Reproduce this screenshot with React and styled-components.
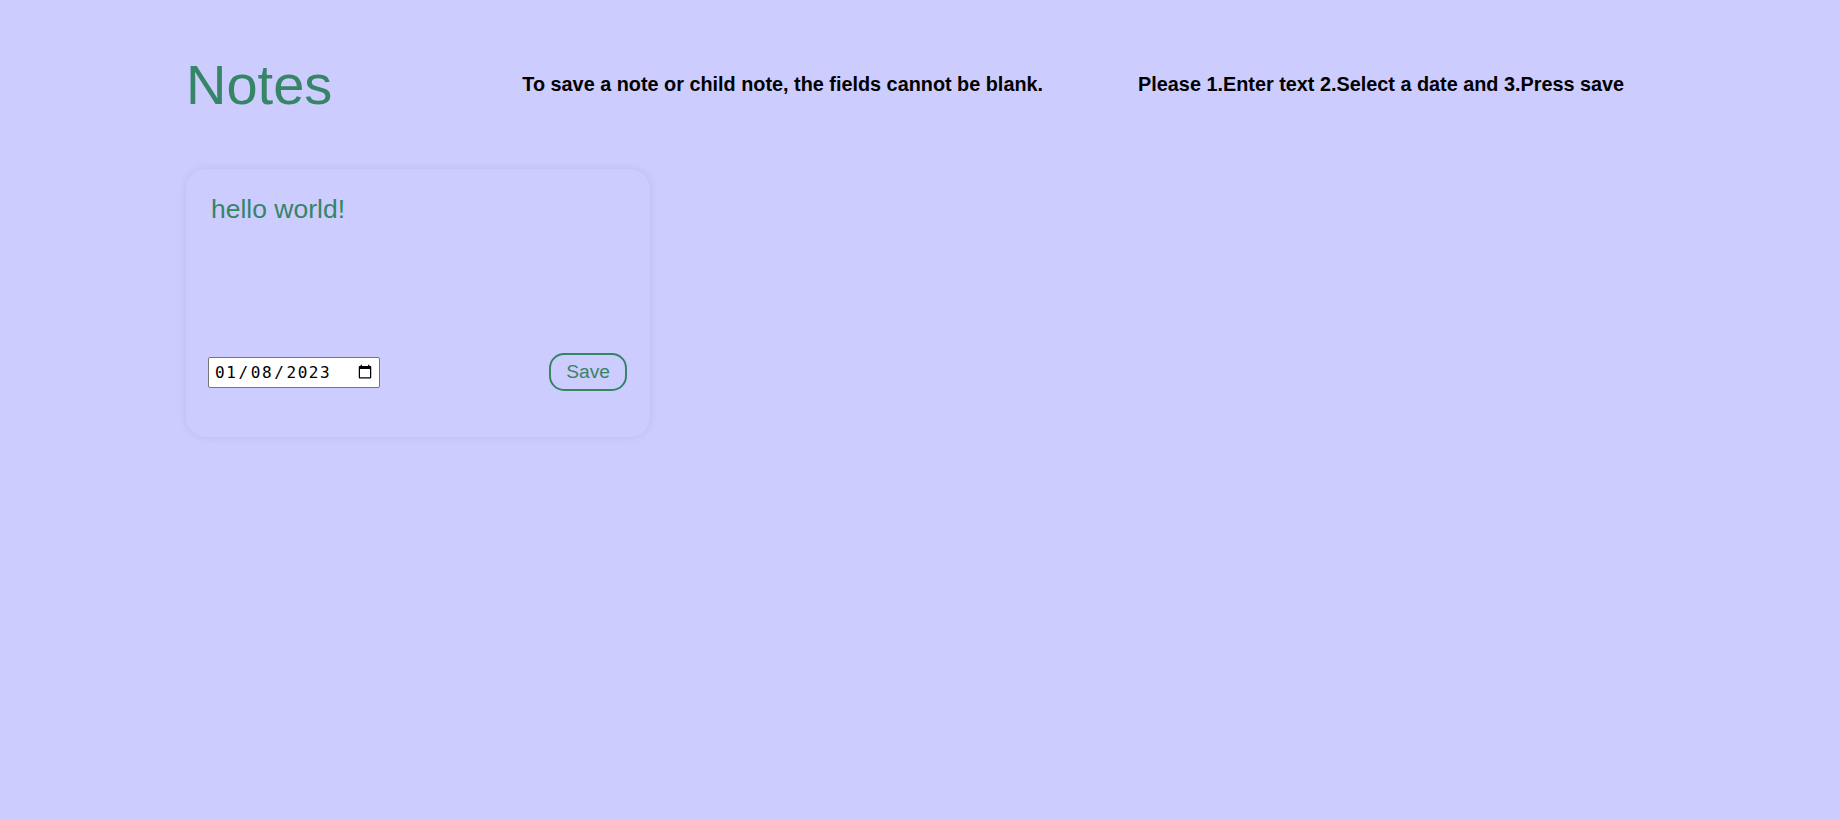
import styled, { createGlobalStyle } from "styled-components";

const GlobalStyle = createGlobalStyle`
	html, body {
		margin: 0;
		padding: 0;
		background-color: #ccccff;
		font-family: "Liberation Sans", Arial, sans-serif;
	}
`;

const Page = styled.div`
	min-height: 820px;
	padding: 52px 186px 0 186px;
	box-sizing: border-box;
`;

const Header = styled.header`
	display: flex;
	align-items: center;
`;

const Title = styled.h1`
	margin: 0;
	font-size: 56px;
	font-weight: 400;
	color: #368566;
`;

const Hint = styled.h3`
	margin: 0 0 0 ${(p) => p.$gap}px;
	font-size: 19.83px;
	font-weight: 700;
	color: #000;
`;

const Notes = styled.div`
	display: flex;
	flex-wrap: wrap;
	gap: 20px;
	margin-top: 52px;
`;

const Card = styled.div`
	width: 464px;
	height: 268px;
	box-sizing: border-box;
	padding: 25px 23px 0 22px;
	border-radius: 20px;
	background-color: #ccccff;
	box-shadow: 0 0 8px rgba(0, 0, 0, 0.08);
	display: flex;
	flex-direction: column;
`;

const TextArea = styled.textarea`
	height: 159px;
	margin: 0;
	padding: 0 0 0 3px;
	border: none;
	outline: none;
	resize: none;
	background: transparent;
	color: #368566;
	font-family: "Liberation Sans", Arial, sans-serif;
	font-size: 26.5px;
	box-sizing: border-box;
`;

const Footer = styled.div`
	display: flex;
	align-items: center;
	justify-content: space-between;
`;

const DateInput = styled.input`
	width: 172px;
	height: 31px;
	box-sizing: border-box;
	font-family: "DejaVu Sans Mono", monospace;
	font-size: 16px;
	letter-spacing: 1.6px;
	background: #fff;
	border: 1px solid #767676;
	border-radius: 2px;
	padding: 0 4px 0 5px;
	color: #000;
`;

const SaveButton = styled.button`
	height: 38px;
	padding: 0 15px;
	border: 2px solid #368566;
	border-radius: 15px;
	background: transparent;
	color: #368566;
	font-family: "Liberation Sans", Arial, sans-serif;
	font-size: 19.2px;
	cursor: pointer;
`;

const App = () => {
	return (
		<Page>
			<GlobalStyle />
			<Header>
				<Title>Notes</Title>
				<Hint $gap={190}>To save a note or child note, the fields cannot be blank.</Hint>
				<Hint $gap={95}>Please 1.Enter text 2.Select a date and 3.Press save</Hint>
			</Header>
			<Notes>
				<Card>
					<TextArea defaultValue="hello world!" />
					<Footer>
						<DateInput type="date" defaultValue="2023-01-08" />
						<SaveButton>Save</SaveButton>
					</Footer>
				</Card>
			</Notes>
		</Page>
	);
};

export default App;
